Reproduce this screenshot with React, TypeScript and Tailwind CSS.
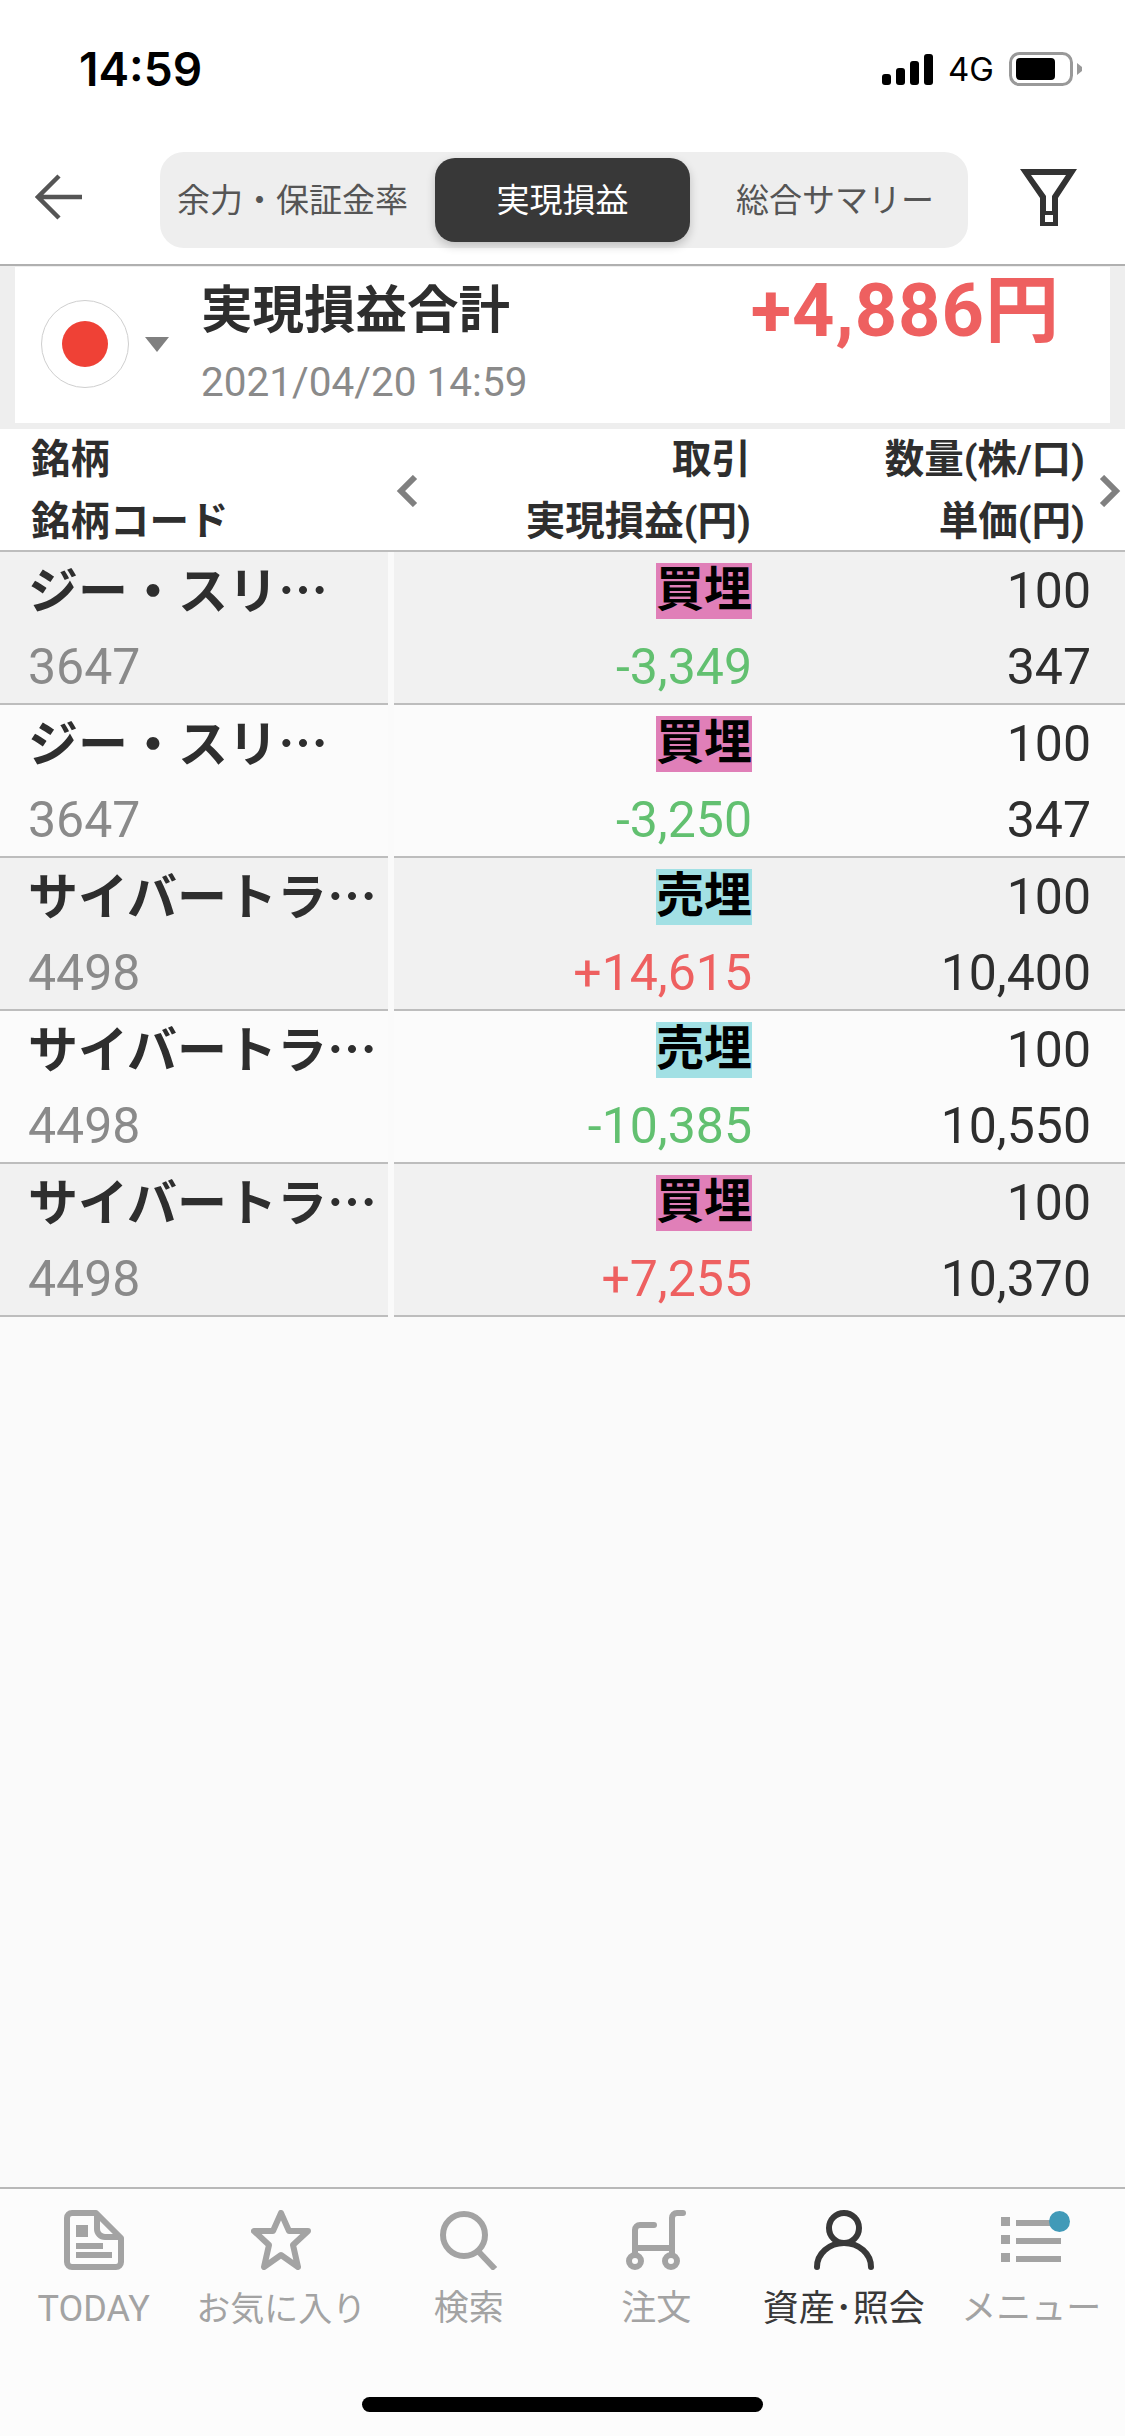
import React from 'react';

const rows = [
  { name: 'ジー・スリ…', code: '3647', side: '買埋', pl: '-3,349', qty: '100', price: '347' },
  { name: 'ジー・スリ…', code: '3647', side: '買埋', pl: '-3,250', qty: '100', price: '347' },
  { name: 'サイバートラ…', code: '4498', side: '売埋', pl: '+14,615', qty: '100', price: '10,400' },
  { name: 'サイバートラ…', code: '4498', side: '売埋', pl: '-10,385', qty: '100', price: '10,550' },
  { name: 'サイバートラ…', code: '4498', side: '買埋', pl: '+7,255', qty: '100', price: '10,370' },
];

const font = "font-['Roboto','Noto_Sans_CJK_JP',sans-serif]";

const TodayIcon = () => (
  <svg width="60" height="60" viewBox="0 0 60 60" fill="none">
    <path d="M8 3h24l25 25v24a5 5 0 0 1-5 5H8a5 5 0 0 1-5-5V8a5 5 0 0 1 5-5z" stroke="#a3a3a3" strokeWidth="6" strokeLinejoin="round" />
    <path d="M33 4v15a8 8 0 0 0 8 8h15" stroke="#a3a3a3" strokeWidth="6" />
    <path d="M12 15h12v12H12zM12 33h27v6H12zM12 42h36v6H12z" fill="#a3a3a3" />
  </svg>
);

const StarIcon = () => (
  <svg width="60" height="60" viewBox="0 0 60 60" fill="none">
    <path d="M30 3l8 18h19L42 35l5 22-17-12-17 12 5-22L3 21h19z" stroke="#a3a3a3" strokeWidth="6" strokeLinejoin="round" />
  </svg>
);

const SearchIcon = () => (
  <svg width="60" height="60" viewBox="0 0 60 60" fill="none">
    <circle cx="25" cy="25" r="21" stroke="#a3a3a3" strokeWidth="6" />
    <path d="M39 41l17 18" stroke="#a3a3a3" strokeWidth="6" />
  </svg>
);

const CartIcon = () => (
  <svg width="60" height="60" viewBox="0 0 60 60" fill="none">
    <path d="M57 3H51a5 5 0 0 0-5 5v37M28 15H14a5 5 0 0 0-5 5v25" stroke="#a3a3a3" strokeWidth="6" strokeLinecap="round" />
    <path d="M9 38h37" stroke="#a3a3a3" strokeWidth="6" />
    <circle cx="9" cy="51" r="6" stroke="#a3a3a3" strokeWidth="6" fill="#fcfcfc" />
    <circle cx="45" cy="51" r="6" stroke="#a3a3a3" strokeWidth="6" fill="#fcfcfc" />
  </svg>
);

const PersonIcon = () => (
  <svg width="60" height="60" viewBox="0 0 60 60" fill="none">
    <circle cx="30" cy="18" r="15" stroke="#383838" strokeWidth="6" />
    <path d="M3 57a27 24 0 0 1 54 0" stroke="#383838" strokeWidth="6" strokeLinecap="round" />
  </svg>
);

const MenuIcon = () => (
  <div className="relative w-[60px] h-[60px]">
    <svg width="60" height="60" viewBox="0 0 60 60" fill="#a3a3a3">
      <path d="M0 7h9v9H0zM15 10h45v6H15zM0 25h9v9H0zM15 28h45v6H15zM0 43h9v9H0zM15 46h45v6H15z" />
    </svg>
    <div className="absolute left-[48px] top-[1px] w-[21px] h-[21px] rounded-full bg-[#419ab8]" />
  </div>
);

const navItems = [
  { label: 'TODAY', icon: <TodayIcon />, active: false, size: 'text-[36px]' },
  { label: 'お気に入り', icon: <StarIcon />, active: false, size: 'text-[34px]' },
  { label: '検索', icon: <SearchIcon />, active: false, size: 'text-[35px]' },
  { label: '注文', icon: <CartIcon />, active: false, size: 'text-[35px]' },
  { label: '資産･照会', icon: <PersonIcon />, active: true, size: 'text-[36px]' },
  { label: 'メニュー', icon: <MenuIcon />, active: false, size: 'text-[35px]' },
];

const App: React.FC = () => {
  return (
    <div className={`w-[1125px] h-[2436px] flex flex-col bg-[#fafafa] text-[#2e2e2e] ${font}`}>
      <div className="h-[152px] bg-white shrink-0 flex items-start justify-between pl-[79px] pr-[43px] pt-[44px]">
        <span className="text-[46px] leading-[50px] font-semibold text-black font-['Inter',sans-serif]">14:59</span>
        <div className="flex items-center gap-[15px] h-[50px]">
          <svg width="51" height="31" viewBox="0 0 51 31" fill="#000">
            <rect x="0" y="20" width="9" height="11" rx="3" />
            <rect x="14" y="14" width="9" height="17" rx="3" />
            <rect x="28" y="7" width="9" height="24" rx="3" />
            <rect x="42" y="0" width="9" height="31" rx="3" />
          </svg>
          <span className="text-[33px] leading-none text-black font-['Inter',sans-serif]">4G</span>
          <svg width="73" height="34" viewBox="0 0 73 34" fill="none">
            <rect x="1.500" y="1.500" width="61" height="31" rx="9" stroke="#999" strokeWidth="3" />
            <rect x="7" y="6" width="39" height="22" rx="4" fill="#000" />
            <path d="M68 11l5 4v4l-5 4z" fill="#999" />
          </svg>
        </div>
      </div>

      <div className="h-[114px] bg-white shrink-0 border-b-2 border-[#b0b0b0] flex items-start">
        <div className="w-[160px] pl-[35px] pt-[22px]">
          <svg width="48" height="46" viewBox="0 0 48 46" fill="none">
            <path d="M24 2L3 23l21 21M3 23h44" stroke="#555" strokeWidth="4.500" />
          </svg>
        </div>
        <div className="w-[808px] h-[96px] rounded-[24px] bg-[#eeeeee] flex items-center text-[33px] leading-none text-[#555]">
          <span className="w-[275px] pl-[17px] whitespace-nowrap">余力・保証金率</span>
          <span className="w-[255px] h-[84px] rounded-[20px] bg-[#383838] text-white flex items-center justify-center shadow-[0_4px_10px_rgba(0,0,0,0.2)]">実現損益</span>
          <span className="flex-1 pl-[46px] whitespace-nowrap">総合サマリー</span>
        </div>
        <div className="pl-[52px] pt-[17px]">
          <svg width="58" height="58" viewBox="0 0 58 58" fill="#333" fillRule="evenodd">
            <path d="M0 0h57L38 29v28H20V29zM11 6l15 21v15h6V27L46 6zM25 46v7h8v-7z" />
          </svg>
        </div>
      </div>

      <div className="h-[163px] shrink-0 bg-[#eeeeee] pt-[1px] px-[15px] pb-[6px]">
        <div className="h-full bg-white flex items-start">
          <div className="w-[88px] h-[88px] ml-[26px] mt-[33px] rounded-full border border-[#cfcfcf] flex items-center justify-center">
            <div className="w-[46px] h-[46px] rounded-full bg-[#ef4136]" />
          </div>
          <svg className="ml-[16px] mt-[70px]" width="24" height="15" viewBox="0 0 24 15" fill="#808080">
            <path d="M0 0h24L12 15z" />
          </svg>
          <div className="ml-[32px] pt-[14px] flex flex-col">
            <span className="text-[51.500px] leading-[60px] font-bold">実現損益合計</span>
            <span className="text-[40.500px] leading-[50px] mt-[16px] text-[#8a8a8a]">2021/04/20 14:59</span>
          </div>
          <span className="ml-auto mr-[50px] text-[74px] leading-[88px] font-bold text-[#ee6060] tracking-[1px]">+4,886円</span>
        </div>
      </div>

      <div className="h-[123px] shrink-0 bg-white border-b-2 border-[#bdbdbd] flex text-[39.500px] leading-[62px] font-bold relative">
        <div className="w-[388px] pl-[31px] flex flex-col">
          <span>銘柄</span>
          <span>銘柄コード</span>
        </div>
        <div className="w-[363px] text-right flex flex-col">
          <span>取引</span>
          <span>実現損益(円)</span>
        </div>
        <div className="w-[334px] text-right flex flex-col">
          <span>数量(株/口)</span>
          <span>単価(円)</span>
        </div>
        <svg className="absolute left-[396px] top-[46px]" width="22" height="32" viewBox="0 0 22 32" fill="none">
          <path d="M19 2L5 16l14 14" stroke="#808080" strokeWidth="6" />
        </svg>
        <svg className="absolute left-[1099px] top-[46px]" width="22" height="32" viewBox="0 0 22 32" fill="none">
          <path d="M3 2l14 14L3 30" stroke="#808080" strokeWidth="6" />
        </svg>
      </div>

      <div className="flex-1 flex flex-col">
        {rows.map((row, i) => {
          const bg = i % 2 === 0 ? 'bg-[#f1f1f1]' : 'bg-[#fbfbfb]';
          return (
            <div key={i} className="h-[153px] flex">
              <div className={`w-[388px] pl-[28px] border-b-2 border-[#bdbdbd] flex flex-col ${bg}`}>
                <div className="h-[78px] pb-[8px] shrink-0 flex items-center text-[50px] leading-[60px] font-bold whitespace-nowrap font-['Noto_Sans_CJK_JP',sans-serif]">{row.name}</div>
                <span className="h-[73px] text-[50px] leading-[75px] text-[#8a8a8a]">{row.code}</span>
              </div>
              <div className="w-[6px] bg-[#fafafa]" />
              <div className={`flex-1 flex border-b-2 border-[#bdbdbd] text-[50px] ${bg}`}>
                <div className="w-[358px] flex flex-col items-end">
                  <div className="h-[78px] shrink-0 flex items-center">
                    <span className={`w-[96px] h-[56px] leading-[54px] text-center text-[48px] font-bold text-black ${row.side === '買埋' ? 'bg-[#e07fb8]' : 'bg-[#a2e0e4]'}`}>
                      {row.side}
                    </span>
                  </div>
                  <span className={`h-[73px] leading-[75px] ${row.pl.startsWith('+') ? 'text-[#ee6060]' : 'text-[#62c070]'}`}>{row.pl}</span>
                </div>
                <div className="flex-1 flex flex-col items-end pr-[34px]">
                  <span className="h-[78px] shrink-0 leading-[78px]">{row.qty}</span>
                  <span className="h-[73px] leading-[75px]">{row.price}</span>
                </div>
              </div>
            </div>
          );
        })}
      </div>

      <div className="h-[249px] shrink-0 border-t-2 border-[#b8b8b8] bg-[#fcfcfc] flex flex-col">
        <div className="flex pt-[21px]">
          {navItems.map((item) => (
            <div key={item.label} className="flex-1 flex flex-col items-center">
              <div className="h-[60px] flex items-center justify-center">{item.icon}</div>
              <span className={`mt-[19px] leading-[40px] whitespace-nowrap ${item.size} ${item.active ? 'text-[#383838]' : 'text-[#a3a3a3]'}`}>
                {item.label}
              </span>
            </div>
          ))}
        </div>
        <div className="mt-auto mb-[24px] mx-auto w-[401px] h-[15px] rounded-full bg-black" />
      </div>
    </div>
  );
};

export default App;
